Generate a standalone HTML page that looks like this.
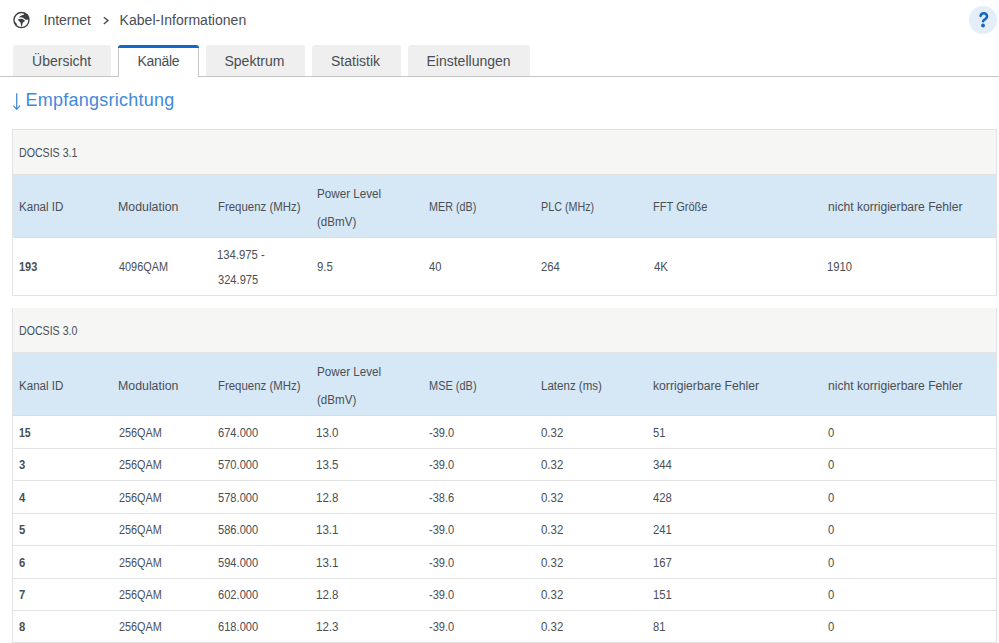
<!DOCTYPE html>
<html><head><meta charset="utf-8"><style>
html,body{margin:0;padding:0;background:#fff;width:999px;height:643px;overflow:hidden;position:relative}
body{font-family:"Liberation Sans",sans-serif;}
.a{position:absolute;white-space:nowrap}
.box{position:absolute}
</style></head><body>
<svg class="box" style="left:12px;top:11px" width="19" height="19" viewBox="0 0 643 643">
<circle cx="320" cy="307" r="255" fill="none" stroke="#3b4045" stroke-width="46"/>
<path d="M240 200 L285 165 L335 145 L395 138 L400 95 L440 60 L540 120 L585 220 L575 290 L500 300 L465 298 L370 232 L300 215 L250 220 Z" fill="#3b4045"/>
<path d="M200 292 L250 270 L330 262 L365 272 L448 335 L405 368 L365 400 L348 460 L333 528 L312 528 L300 450 L282 382 L232 342 Z" fill="#3b4045"/>
<path d="M68 365 L130 388 L168 458 L140 490 L85 440 Z" fill="#3b4045"/>
</svg>
<div class="a" style="left:43.5px;top:12.65px;font-size:14px;line-height:14px;letter-spacing:0px;font-weight:400;color:#484e54;">Internet</div>
<svg class="box" style="left:102px;top:16px" width="8" height="10" viewBox="0 0 8 10"><path d="M1.8 1.2 L6.0 4.6 L1.8 8.0" fill="none" stroke="#40464c" stroke-width="1.35"/></svg>
<div class="a" style="left:119.6px;top:12.65px;font-size:14px;line-height:14px;letter-spacing:0.03px;font-weight:400;color:#484e54;">Kabel-Informationen</div>
<div class="box" style="left:969px;top:6px;width:28px;height:28px;border-radius:50%;background:#e3eef9"></div>
<svg class="box" style="left:940px;top:0px" width="59" height="40" viewBox="0 0 948 643"><path d="M652 258 C658 226 684 214 702 214 C740 214 758 240 756 268 C754 300 718 310 700 328 L692 342" fill="none" stroke="#1366c6" stroke-width="40" stroke-linecap="round"/><circle cx="691" cy="410" r="31" fill="#1366c6"/></svg>
<div class="box" style="left:0;top:76px;width:999px;height:1px;background:#c6c6c6"></div>
<div class="box" style="left:13px;top:45px;width:98px;height:31px;background:#efefef;border-radius:3px 3px 0 0"></div>
<div class="a" style="left:32.1px;top:54.15px;font-size:14px;line-height:14px;letter-spacing:0px;font-weight:400;color:#484e54;">Übersicht</div>
<div class="box" style="left:118px;top:45px;width:79px;height:31px;background:#fff;border-left:1px solid #c8c8c8;border-right:1px solid #c8c8c8;border-radius:3px 3px 0 0"></div>
<div class="box" style="left:118px;top:45px;width:81px;height:3px;background:#0f69cc;border-radius:3px 3px 0 0"></div>
<div class="box" style="left:119px;top:76px;width:79px;height:1px;background:#fff"></div>
<div class="a" style="left:137.5px;top:54.15px;font-size:14px;line-height:14px;letter-spacing:-0.3px;font-weight:400;color:#484e54;">Kanäle</div>
<div class="box" style="left:206px;top:45px;width:99px;height:31px;background:#efefef;border-radius:3px 3px 0 0"></div>
<div class="a" style="left:224.5px;top:54.15px;font-size:14px;line-height:14px;letter-spacing:0px;font-weight:400;color:#484e54;">Spektrum</div>
<div class="box" style="left:312px;top:45px;width:89px;height:31px;background:#efefef;border-radius:3px 3px 0 0"></div>
<div class="a" style="left:331.0px;top:54.15px;font-size:14px;line-height:14px;letter-spacing:0px;font-weight:400;color:#484e54;">Statistik</div>
<div class="box" style="left:408px;top:45px;width:122px;height:31px;background:#efefef;border-radius:3px 3px 0 0"></div>
<div class="a" style="left:426.5px;top:54.15px;font-size:14px;line-height:14px;letter-spacing:0px;font-weight:400;color:#484e54;">Einstellungen</div>
<svg class="box" style="left:12px;top:92px" width="10" height="19" viewBox="0 0 10 19"><path d="M4.7 1.2 V17.2 M1.3 13.6 L4.7 17.4 L8.1 13.6" fill="none" stroke="#4289d9" stroke-width="1.25"/></svg>
<div class="a" style="left:25.5px;top:90.76px;font-size:18px;line-height:18px;letter-spacing:0.25px;font-weight:400;color:#4289d9;">Empfangsrichtung</div>
<div class="box" style="left:12px;top:129px;width:985px;height:167px;background:#e3e3e3"></div>
<div class="box" style="left:13px;top:130px;width:983px;height:44px;background:#f6f6f4"></div>
<div class="box" style="left:13px;top:174px;width:983px;height:1px;background:#e0e3e4"></div>
<div class="box" style="left:13px;top:175px;width:983px;height:62px;background:#d6e7f5"></div>
<div class="box" style="left:13px;top:237px;width:983px;height:1px;background:#d0e2f2"></div>
<div class="box" style="left:13px;top:238px;width:983px;height:57px;background:#fff"></div>
<div class="a" style="left:19.250735294117646px;top:146.62px;font-size:12.5px;line-height:12.5px;letter-spacing:0px;font-weight:400;color:#4a4f55;transform:scaleX(0.8493);transform-origin:0 0;">DOCSIS 3.1</div>
<div class="a" style="left:19.17446808510638px;top:201.02px;font-size:12.5px;line-height:12.5px;letter-spacing:0px;font-weight:400;color:#4a4f55;transform:scaleX(0.9255);transform-origin:0 0;">Kanal ID</div>
<div class="a" style="left:118.11250000000001px;top:201.02px;font-size:12.5px;line-height:12.5px;letter-spacing:0px;font-weight:400;color:#4a4f55;transform:scaleX(0.9875);transform-origin:0 0;">Modulation</div>
<div class="a" style="left:218.1870786516854px;top:201.02px;font-size:12.5px;line-height:12.5px;letter-spacing:0px;font-weight:400;color:#4a4f55;transform:scaleX(0.9129);transform-origin:0 0;">Frequenz (MHz)</div>
<div class="a" style="left:429.2388888888889px;top:201.02px;font-size:12.5px;line-height:12.5px;letter-spacing:0px;font-weight:400;color:#4a4f55;transform:scaleX(0.8611);transform-origin:0 0;">MER (dB)</div>
<div class="a" style="left:541.239344262295px;top:201.02px;font-size:12.5px;line-height:12.5px;letter-spacing:0px;font-weight:400;color:#4a4f55;transform:scaleX(0.8607);transform-origin:0 0;">PLC (MHz)</div>
<div class="a" style="left:653.2147540983607px;top:201.02px;font-size:12.5px;line-height:12.5px;letter-spacing:0px;font-weight:400;color:#4a4f55;transform:scaleX(0.8852);transform-origin:0 0;">FFT Größe</div>
<div class="a" style="left:828.1318840579711px;top:201.02px;font-size:12.5px;line-height:12.5px;letter-spacing:0px;font-weight:400;color:#4a4f55;transform:scaleX(0.9681);transform-origin:0 0;">nicht korrigierbare Fehler</div>
<div class="a" style="left:317.1671641791044px;top:187.52px;font-size:12.5px;line-height:12.5px;letter-spacing:0px;font-weight:400;color:#4a4f55;transform:scaleX(0.9328);transform-origin:0 0;">Power Level</div>
<div class="a" style="left:317.1731707317073px;top:215.52px;font-size:12.5px;line-height:12.5px;letter-spacing:0px;font-weight:400;color:#4a4f55;transform:scaleX(0.9268);transform-origin:0 0;">(dBmV)</div>
<div class="a" style="left:19.2px;top:260.52px;font-size:12.5px;line-height:12.5px;letter-spacing:0px;font-weight:700;color:#4a4f55;transform:scaleX(0.8810);transform-origin:0 0;">193</div>
<div class="a" style="left:119.10000000000001px;top:260.52px;font-size:12.5px;line-height:12.5px;letter-spacing:0px;font-weight:400;color:#4a4f55;transform:scaleX(0.8705);transform-origin:0 0;">4096QAM</div>
<div class="a" style="left:317.2px;top:260.52px;font-size:12.5px;line-height:12.5px;letter-spacing:0px;font-weight:400;color:#4a4f55;transform:scaleX(0.9118);transform-origin:0 0;">9.5</div>
<div class="a" style="left:429.2px;top:260.52px;font-size:12.5px;line-height:12.5px;letter-spacing:0px;font-weight:400;color:#4a4f55;transform:scaleX(0.8929);transform-origin:0 0;">40</div>
<div class="a" style="left:541.2px;top:260.52px;font-size:12.5px;line-height:12.5px;letter-spacing:0px;font-weight:400;color:#4a4f55;transform:scaleX(0.9048);transform-origin:0 0;">264</div>
<div class="a" style="left:654.1px;top:260.52px;font-size:12.5px;line-height:12.5px;letter-spacing:0px;font-weight:400;color:#4a4f55;transform:scaleX(0.9167);transform-origin:0 0;">4K</div>
<div class="a" style="left:827.2962962962963px;top:260.52px;font-size:12.5px;line-height:12.5px;letter-spacing:0px;font-weight:400;color:#4a4f55;transform:scaleX(0.9037);transform-origin:0 0;">1910</div>
<div class="a" style="left:217.29615384615383px;top:248.52px;font-size:12.5px;line-height:12.5px;letter-spacing:0px;font-weight:400;color:#4a4f55;transform:scaleX(0.9038);transform-origin:0 0;">134.975 -</div>
<div class="a" style="left:218.2px;top:273.52px;font-size:12.5px;line-height:12.5px;letter-spacing:0px;font-weight:400;color:#4a4f55;transform:scaleX(0.8889);transform-origin:0 0;">324.975</div>
<div class="box" style="left:12px;top:308px;width:985px;height:335px;background:#e3e3e3"></div>
<div class="box" style="left:13px;top:308px;width:983px;height:44px;background:#f6f6f4"></div>
<div class="box" style="left:13px;top:352px;width:983px;height:1px;background:#e2e3e2"></div>
<div class="box" style="left:13px;top:353px;width:983px;height:62px;background:#d6e7f5"></div>
<div class="box" style="left:13px;top:415px;width:983px;height:1px;background:#d0e2f2"></div>
<div class="box" style="left:13px;top:416px;width:983px;height:32px;background:#fff"></div>
<div class="box" style="left:13px;top:449px;width:983px;height:31px;background:#fff"></div>
<div class="box" style="left:13px;top:481px;width:983px;height:32px;background:#fff"></div>
<div class="box" style="left:13px;top:514px;width:983px;height:31px;background:#fff"></div>
<div class="box" style="left:13px;top:546px;width:983px;height:32px;background:#fff"></div>
<div class="box" style="left:13px;top:579px;width:983px;height:31px;background:#fff"></div>
<div class="box" style="left:13px;top:611px;width:983px;height:31px;background:#fff"></div>
<div class="a" style="left:19.250735294117646px;top:325.02px;font-size:12.5px;line-height:12.5px;letter-spacing:0px;font-weight:400;color:#4a4f55;transform:scaleX(0.8493);transform-origin:0 0;">DOCSIS 3.0</div>
<div class="a" style="left:19.17446808510638px;top:380.02px;font-size:12.5px;line-height:12.5px;letter-spacing:0px;font-weight:400;color:#4a4f55;transform:scaleX(0.9255);transform-origin:0 0;">Kanal ID</div>
<div class="a" style="left:118.11250000000001px;top:380.02px;font-size:12.5px;line-height:12.5px;letter-spacing:0px;font-weight:400;color:#4a4f55;transform:scaleX(0.9875);transform-origin:0 0;">Modulation</div>
<div class="a" style="left:218.1870786516854px;top:380.02px;font-size:12.5px;line-height:12.5px;letter-spacing:0px;font-weight:400;color:#4a4f55;transform:scaleX(0.9129);transform-origin:0 0;">Frequenz (MHz)</div>
<div class="a" style="left:429.2226415094339px;top:380.02px;font-size:12.5px;line-height:12.5px;letter-spacing:0px;font-weight:400;color:#4a4f55;transform:scaleX(0.8774);transform-origin:0 0;">MSE (dB)</div>
<div class="a" style="left:541.1769230769231px;top:380.02px;font-size:12.5px;line-height:12.5px;letter-spacing:0px;font-weight:400;color:#4a4f55;transform:scaleX(0.9231);transform-origin:0 0;">Latenz (ms)</div>
<div class="a" style="left:653.1277777777779px;top:380.02px;font-size:12.5px;line-height:12.5px;letter-spacing:0px;font-weight:400;color:#4a4f55;transform:scaleX(0.9722);transform-origin:0 0;">korrigierbare Fehler</div>
<div class="a" style="left:828.1318840579711px;top:380.02px;font-size:12.5px;line-height:12.5px;letter-spacing:0px;font-weight:400;color:#4a4f55;transform:scaleX(0.9681);transform-origin:0 0;">nicht korrigierbare Fehler</div>
<div class="a" style="left:317.1671641791044px;top:366.02px;font-size:12.5px;line-height:12.5px;letter-spacing:0px;font-weight:400;color:#4a4f55;transform:scaleX(0.9328);transform-origin:0 0;">Power Level</div>
<div class="a" style="left:317.1731707317073px;top:394.02px;font-size:12.5px;line-height:12.5px;letter-spacing:0px;font-weight:400;color:#4a4f55;transform:scaleX(0.9268);transform-origin:0 0;">(dBmV)</div>
<div class="a" style="left:19.2px;top:426.82px;font-size:12.5px;line-height:12.5px;letter-spacing:0px;font-weight:700;color:#4a4f55;transform:scaleX(0.8393);transform-origin:0 0;">15</div>
<div class="a" style="left:119.10000000000001px;top:426.82px;font-size:12.5px;line-height:12.5px;letter-spacing:0px;font-weight:400;color:#4a4f55;transform:scaleX(0.8673);transform-origin:0 0;">256QAM</div>
<div class="a" style="left:218.2px;top:426.82px;font-size:12.5px;line-height:12.5px;letter-spacing:0px;font-weight:400;color:#4a4f55;transform:scaleX(0.8889);transform-origin:0 0;">674.000</div>
<div class="a" style="left:316.27608695652174px;top:426.82px;font-size:12.5px;line-height:12.5px;letter-spacing:0px;font-weight:400;color:#4a4f55;transform:scaleX(0.9239);transform-origin:0 0;">13.0</div>
<div class="a" style="left:429.2px;top:426.82px;font-size:12.5px;line-height:12.5px;letter-spacing:0px;font-weight:400;color:#4a4f55;transform:scaleX(0.8839);transform-origin:0 0;">-39.0</div>
<div class="a" style="left:541.2px;top:426.82px;font-size:12.5px;line-height:12.5px;letter-spacing:0px;font-weight:400;color:#4a4f55;transform:scaleX(0.9167);transform-origin:0 0;">0.32</div>
<div class="a" style="left:653.2px;top:426.82px;font-size:12.5px;line-height:12.5px;letter-spacing:0px;font-weight:400;color:#4a4f55;transform:scaleX(0.8929);transform-origin:0 0;">51</div>
<div class="a" style="left:828.2px;top:426.82px;font-size:12.5px;line-height:12.5px;letter-spacing:0px;font-weight:400;color:#4a4f55;transform:scaleX(0.9000);transform-origin:0 0;">0</div>
<div class="a" style="left:19.2px;top:459.32px;font-size:12.5px;line-height:12.5px;letter-spacing:0px;font-weight:700;color:#4a4f55;transform:scaleX(0.9000);transform-origin:0 0;">3</div>
<div class="a" style="left:119.10000000000001px;top:459.32px;font-size:12.5px;line-height:12.5px;letter-spacing:0px;font-weight:400;color:#4a4f55;transform:scaleX(0.8673);transform-origin:0 0;">256QAM</div>
<div class="a" style="left:218.2px;top:459.32px;font-size:12.5px;line-height:12.5px;letter-spacing:0px;font-weight:400;color:#4a4f55;transform:scaleX(0.8889);transform-origin:0 0;">570.000</div>
<div class="a" style="left:316.27608695652174px;top:459.32px;font-size:12.5px;line-height:12.5px;letter-spacing:0px;font-weight:400;color:#4a4f55;transform:scaleX(0.9239);transform-origin:0 0;">13.5</div>
<div class="a" style="left:429.2px;top:459.32px;font-size:12.5px;line-height:12.5px;letter-spacing:0px;font-weight:400;color:#4a4f55;transform:scaleX(0.8839);transform-origin:0 0;">-39.0</div>
<div class="a" style="left:541.2px;top:459.32px;font-size:12.5px;line-height:12.5px;letter-spacing:0px;font-weight:400;color:#4a4f55;transform:scaleX(0.9167);transform-origin:0 0;">0.32</div>
<div class="a" style="left:653.2px;top:459.32px;font-size:12.5px;line-height:12.5px;letter-spacing:0px;font-weight:400;color:#4a4f55;transform:scaleX(0.9048);transform-origin:0 0;">344</div>
<div class="a" style="left:828.2px;top:459.32px;font-size:12.5px;line-height:12.5px;letter-spacing:0px;font-weight:400;color:#4a4f55;transform:scaleX(0.9000);transform-origin:0 0;">0</div>
<div class="a" style="left:19.2px;top:491.82px;font-size:12.5px;line-height:12.5px;letter-spacing:0px;font-weight:700;color:#4a4f55;transform:scaleX(0.9000);transform-origin:0 0;">4</div>
<div class="a" style="left:119.10000000000001px;top:491.82px;font-size:12.5px;line-height:12.5px;letter-spacing:0px;font-weight:400;color:#4a4f55;transform:scaleX(0.8673);transform-origin:0 0;">256QAM</div>
<div class="a" style="left:218.2px;top:491.82px;font-size:12.5px;line-height:12.5px;letter-spacing:0px;font-weight:400;color:#4a4f55;transform:scaleX(0.8889);transform-origin:0 0;">578.000</div>
<div class="a" style="left:316.27608695652174px;top:491.82px;font-size:12.5px;line-height:12.5px;letter-spacing:0px;font-weight:400;color:#4a4f55;transform:scaleX(0.9239);transform-origin:0 0;">12.8</div>
<div class="a" style="left:429.2px;top:491.82px;font-size:12.5px;line-height:12.5px;letter-spacing:0px;font-weight:400;color:#4a4f55;transform:scaleX(0.8839);transform-origin:0 0;">-38.6</div>
<div class="a" style="left:541.2px;top:491.82px;font-size:12.5px;line-height:12.5px;letter-spacing:0px;font-weight:400;color:#4a4f55;transform:scaleX(0.9167);transform-origin:0 0;">0.32</div>
<div class="a" style="left:653.2px;top:491.82px;font-size:12.5px;line-height:12.5px;letter-spacing:0px;font-weight:400;color:#4a4f55;transform:scaleX(0.9048);transform-origin:0 0;">428</div>
<div class="a" style="left:828.2px;top:491.82px;font-size:12.5px;line-height:12.5px;letter-spacing:0px;font-weight:400;color:#4a4f55;transform:scaleX(0.9000);transform-origin:0 0;">0</div>
<div class="a" style="left:19.2px;top:524.12px;font-size:12.5px;line-height:12.5px;letter-spacing:0px;font-weight:700;color:#4a4f55;transform:scaleX(0.9000);transform-origin:0 0;">5</div>
<div class="a" style="left:119.10000000000001px;top:524.12px;font-size:12.5px;line-height:12.5px;letter-spacing:0px;font-weight:400;color:#4a4f55;transform:scaleX(0.8673);transform-origin:0 0;">256QAM</div>
<div class="a" style="left:218.2px;top:524.12px;font-size:12.5px;line-height:12.5px;letter-spacing:0px;font-weight:400;color:#4a4f55;transform:scaleX(0.8889);transform-origin:0 0;">586.000</div>
<div class="a" style="left:316.27608695652174px;top:524.12px;font-size:12.5px;line-height:12.5px;letter-spacing:0px;font-weight:400;color:#4a4f55;transform:scaleX(0.9239);transform-origin:0 0;">13.1</div>
<div class="a" style="left:429.2px;top:524.12px;font-size:12.5px;line-height:12.5px;letter-spacing:0px;font-weight:400;color:#4a4f55;transform:scaleX(0.8839);transform-origin:0 0;">-39.0</div>
<div class="a" style="left:541.2px;top:524.12px;font-size:12.5px;line-height:12.5px;letter-spacing:0px;font-weight:400;color:#4a4f55;transform:scaleX(0.9167);transform-origin:0 0;">0.32</div>
<div class="a" style="left:653.2px;top:524.12px;font-size:12.5px;line-height:12.5px;letter-spacing:0px;font-weight:400;color:#4a4f55;transform:scaleX(0.9048);transform-origin:0 0;">241</div>
<div class="a" style="left:828.2px;top:524.12px;font-size:12.5px;line-height:12.5px;letter-spacing:0px;font-weight:400;color:#4a4f55;transform:scaleX(0.9000);transform-origin:0 0;">0</div>
<div class="a" style="left:19.2px;top:556.52px;font-size:12.5px;line-height:12.5px;letter-spacing:0px;font-weight:700;color:#4a4f55;transform:scaleX(0.9000);transform-origin:0 0;">6</div>
<div class="a" style="left:119.10000000000001px;top:556.52px;font-size:12.5px;line-height:12.5px;letter-spacing:0px;font-weight:400;color:#4a4f55;transform:scaleX(0.8673);transform-origin:0 0;">256QAM</div>
<div class="a" style="left:218.2px;top:556.52px;font-size:12.5px;line-height:12.5px;letter-spacing:0px;font-weight:400;color:#4a4f55;transform:scaleX(0.8889);transform-origin:0 0;">594.000</div>
<div class="a" style="left:316.27608695652174px;top:556.52px;font-size:12.5px;line-height:12.5px;letter-spacing:0px;font-weight:400;color:#4a4f55;transform:scaleX(0.9239);transform-origin:0 0;">13.1</div>
<div class="a" style="left:429.2px;top:556.52px;font-size:12.5px;line-height:12.5px;letter-spacing:0px;font-weight:400;color:#4a4f55;transform:scaleX(0.8839);transform-origin:0 0;">-39.0</div>
<div class="a" style="left:541.2px;top:556.52px;font-size:12.5px;line-height:12.5px;letter-spacing:0px;font-weight:400;color:#4a4f55;transform:scaleX(0.9167);transform-origin:0 0;">0.32</div>
<div class="a" style="left:653.2px;top:556.52px;font-size:12.5px;line-height:12.5px;letter-spacing:0px;font-weight:400;color:#4a4f55;transform:scaleX(0.9048);transform-origin:0 0;">167</div>
<div class="a" style="left:828.2px;top:556.52px;font-size:12.5px;line-height:12.5px;letter-spacing:0px;font-weight:400;color:#4a4f55;transform:scaleX(0.9000);transform-origin:0 0;">0</div>
<div class="a" style="left:19.2px;top:589.02px;font-size:12.5px;line-height:12.5px;letter-spacing:0px;font-weight:700;color:#4a4f55;transform:scaleX(0.9000);transform-origin:0 0;">7</div>
<div class="a" style="left:119.10000000000001px;top:589.02px;font-size:12.5px;line-height:12.5px;letter-spacing:0px;font-weight:400;color:#4a4f55;transform:scaleX(0.8673);transform-origin:0 0;">256QAM</div>
<div class="a" style="left:218.2px;top:589.02px;font-size:12.5px;line-height:12.5px;letter-spacing:0px;font-weight:400;color:#4a4f55;transform:scaleX(0.8889);transform-origin:0 0;">602.000</div>
<div class="a" style="left:316.27608695652174px;top:589.02px;font-size:12.5px;line-height:12.5px;letter-spacing:0px;font-weight:400;color:#4a4f55;transform:scaleX(0.9239);transform-origin:0 0;">12.8</div>
<div class="a" style="left:429.2px;top:589.02px;font-size:12.5px;line-height:12.5px;letter-spacing:0px;font-weight:400;color:#4a4f55;transform:scaleX(0.8839);transform-origin:0 0;">-39.0</div>
<div class="a" style="left:541.2px;top:589.02px;font-size:12.5px;line-height:12.5px;letter-spacing:0px;font-weight:400;color:#4a4f55;transform:scaleX(0.9167);transform-origin:0 0;">0.32</div>
<div class="a" style="left:653.2px;top:589.02px;font-size:12.5px;line-height:12.5px;letter-spacing:0px;font-weight:400;color:#4a4f55;transform:scaleX(0.9048);transform-origin:0 0;">151</div>
<div class="a" style="left:828.2px;top:589.02px;font-size:12.5px;line-height:12.5px;letter-spacing:0px;font-weight:400;color:#4a4f55;transform:scaleX(0.9000);transform-origin:0 0;">0</div>
<div class="a" style="left:19.2px;top:621.32px;font-size:12.5px;line-height:12.5px;letter-spacing:0px;font-weight:700;color:#4a4f55;transform:scaleX(0.9000);transform-origin:0 0;">8</div>
<div class="a" style="left:119.10000000000001px;top:621.32px;font-size:12.5px;line-height:12.5px;letter-spacing:0px;font-weight:400;color:#4a4f55;transform:scaleX(0.8673);transform-origin:0 0;">256QAM</div>
<div class="a" style="left:218.2px;top:621.32px;font-size:12.5px;line-height:12.5px;letter-spacing:0px;font-weight:400;color:#4a4f55;transform:scaleX(0.8889);transform-origin:0 0;">618.000</div>
<div class="a" style="left:316.27608695652174px;top:621.32px;font-size:12.5px;line-height:12.5px;letter-spacing:0px;font-weight:400;color:#4a4f55;transform:scaleX(0.9239);transform-origin:0 0;">12.3</div>
<div class="a" style="left:429.2px;top:621.32px;font-size:12.5px;line-height:12.5px;letter-spacing:0px;font-weight:400;color:#4a4f55;transform:scaleX(0.8839);transform-origin:0 0;">-39.0</div>
<div class="a" style="left:541.2px;top:621.32px;font-size:12.5px;line-height:12.5px;letter-spacing:0px;font-weight:400;color:#4a4f55;transform:scaleX(0.9167);transform-origin:0 0;">0.32</div>
<div class="a" style="left:653.2px;top:621.32px;font-size:12.5px;line-height:12.5px;letter-spacing:0px;font-weight:400;color:#4a4f55;transform:scaleX(0.8929);transform-origin:0 0;">81</div>
<div class="a" style="left:828.2px;top:621.32px;font-size:12.5px;line-height:12.5px;letter-spacing:0px;font-weight:400;color:#4a4f55;transform:scaleX(0.9000);transform-origin:0 0;">0</div>
</body></html>
